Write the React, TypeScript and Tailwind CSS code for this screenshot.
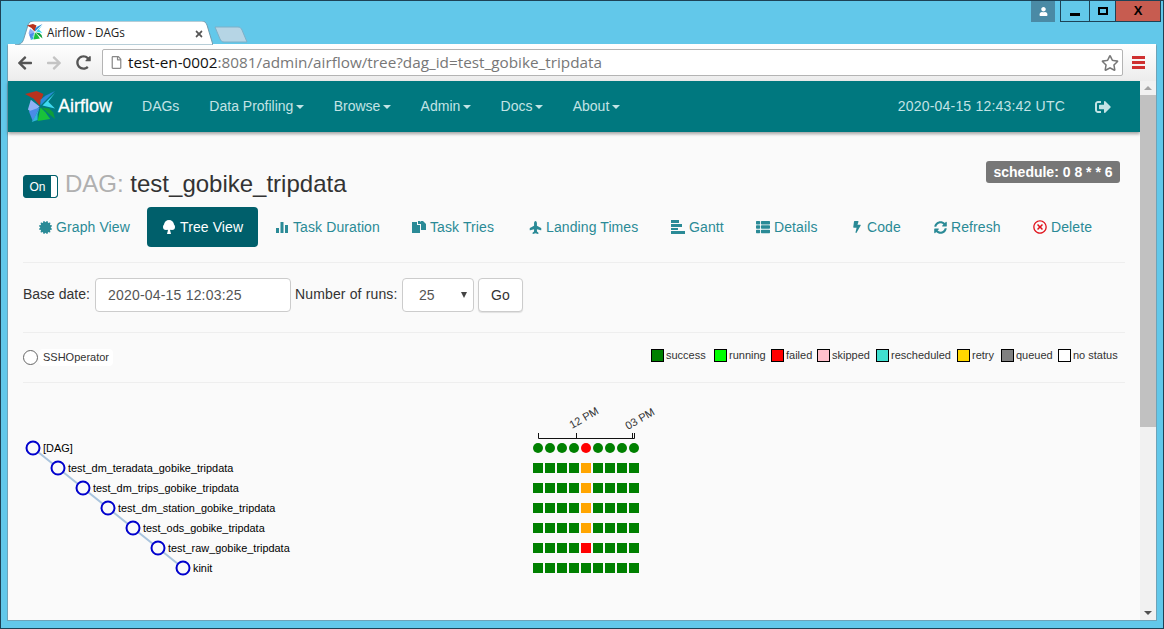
import { FaCertificate, FaPlane, FaThList, FaBolt, FaSyncAlt, FaRegTimesCircle, FaRegStar, FaArrowLeft, FaArrowRight, FaRedoAlt, FaUser, FaSignOutAlt, FaRegFile, FaTimes } from 'react-icons/fa';
import type { ReactNode } from 'react';

const FONT = 'font-["Liberation_Sans",Arial,sans-serif]';

function Pinwheel({ size }: { size: number }) {
  return (
    <svg width={size} height={size} viewBox="0 0 32 32">
      <polygon points="0,3 12,0 19,3 15,15 9,8" fill="#b8321e" />
      <polygon points="31,0 16,15 16,9 21,5" fill="#2a8bd8" />
      <polygon points="31,2 18,15 31,18 24,11" fill="#3fd8f0" />
      <polygon points="31,29 17,17 25,18 29,22" fill="#0e9e3a" />
      <polygon points="13,31 16,17 21,22 26,29" fill="#19c23a" />
      <polygon points="7,32 15,17 13,24 13,30" fill="#2fb5d8" />
      <polygon points="6,9 15,16 8,23 3,19" fill="#8fb0f5" />
      <polygon points="8,31 15,17 4,21" fill="#4a8be8" />
    </svg>
  );
}

function TabLink({ icon, label, width, active, red, narrow }: { icon: ReactNode; label: string; width: string; active?: boolean; red?: boolean; narrow?: boolean }) {
  return (
    <a
      className={`flex h-[40px] shrink-0 items-center gap-[4px] rounded-[4px] pl-[15px] text-[14px] tracking-[0.1px] ${width} ${
        active ? 'bg-[#005f6b] text-white' : 'text-[#2a8a96]'
      }`}
    >
      <span className={`flex justify-center ${narrow ? 'w-[12px]' : 'w-[14px]'} ${red ? 'text-[#e0131c]' : ''}`}>{icon}</span>
      {label}
    </a>
  );
}

function NavItem({ label, caret }: { label: string; caret?: boolean }) {
  return (
    <a className="flex items-center px-[15px] text-[14px] text-[#c3e3e5]">
      {label}
      {caret && <span className="ml-[2.25px] mt-[1px] h-0 w-0 border-x-[4px] border-t-[4px] border-x-transparent border-t-[#c3e3e5]" />}
    </a>
  );
}

function TreeIcon() {
  return (
    <svg width="14" height="14" viewBox="0 0 14 14" fill="currentColor">
      <circle cx="7" cy="5" r="5" />
      <circle cx="4" cy="7" r="3" />
      <circle cx="10" cy="7" r="3" />
      <polygon points="5.5,8 8.5,8 8,10 9,14 5,14 6,10" />
    </svg>
  );
}

function StatsIcon() {
  return (
    <svg width="14" height="14" viewBox="0 0 14 14" fill="currentColor">
      <rect x="1" y="8" width="3" height="5" />
      <rect x="5.5" y="2" width="3" height="11" />
      <rect x="10" y="5" width="3" height="8" />
    </svg>
  );
}

function DuplicateIcon() {
  return (
    <svg width="14" height="14" viewBox="0 0 14 14" fill="currentColor">
      <path d="M0 2h5v3h3v8H0z" />
      <path d="M6 1h2l2 2v1H6z" />
      <path d="M9 1h2l3 3v6H9V5L9 4z" />
    </svg>
  );
}

function GanttIcon() {
  return (
    <svg width="14" height="14" viewBox="0 0 14 14" fill="currentColor">
      <rect x="0" y="0" width="8" height="3" />
      <rect x="0" y="4" width="11" height="3" />
      <rect x="0" y="8" width="7" height="2" />
      <rect x="0" y="11" width="14" height="3" />
    </svg>
  );
}

const legend = [
  { label: 'success', color: 'bg-[#008000]', width: 'w-[63px]' },
  { label: 'running', color: 'bg-[#00ff00]', width: 'w-[57px]' },
  { label: 'failed', color: 'bg-[#ff0000]', width: 'w-[46px]' },
  { label: 'skipped', color: 'bg-[#ffc0cb]', width: 'w-[59px]' },
  { label: 'rescheduled', color: 'bg-[#40e0d0]', width: 'w-[81px]' },
  { label: 'retry', color: 'bg-[#ffd700]', width: 'w-[44px]' },
  { label: 'queued', color: 'bg-[#808080]', width: 'w-[57px]' },
  { label: 'no status', color: 'bg-white', width: 'w-[60px]' },
];

const tasks = [
  { name: '[DAG]', hot: '#ff0000' },
  { name: 'test_dm_teradata_gobike_tripdata', hot: '#ffa500' },
  { name: 'test_dm_trips_gobike_tripdata', hot: '#ffa500' },
  { name: 'test_dm_station_gobike_tripdata', hot: '#ffa500' },
  { name: 'test_ods_gobike_tripdata', hot: '#ffa500' },
  { name: 'test_raw_gobike_tripdata', hot: '#ff0000' },
  { name: 'kinit', hot: '#008000' },
];

// d3 style tree, coordinates are relative to the svg's top left
function TreeChart() {
  const top = 65;
  return (
    <svg width="1132" height="238" className="block">
      <path d={`M25 ${top} L175 ${top + 120}`} stroke="#a9c4de" strokeWidth="2" fill="none" />
      {tasks.map((t, i) => (
        <g key={t.name}>
          <circle cx={25 + i * 25} cy={top + i * 20} r="6.5" fill="#fafafa" stroke="#0000cd" strokeWidth="2" />
          <text x={35 + i * 25} y={top + i * 20 + 4} fontSize="10.9" fill="#000">
            {t.name}
          </text>
          {Array.from({ length: 9 }).map((_, j) => {
            const color = j === 4 ? t.hot : '#008000';
            return i === 0 ? (
              <circle key={j} cx={530 + j * 12} cy={top} r="5" fill={color} />
            ) : (
              <rect key={j} x={525 + j * 12} y={top + i * 20 - 5} width="10" height="10" fill={color} />
            );
          })}
        </g>
      ))}
      <path d="M530.5 50V55.5H626.5V50M568.5 50V55.5M624.5 50V55.5" stroke="#111" fill="none" />
      <text x="0" y="0" fontSize="11" fill="#333" transform="translate(564 46) rotate(-30)">12 PM</text>
      <text x="0" y="0" fontSize="11" fill="#333" transform="translate(620 47) rotate(-30)">03 PM</text>
    </svg>
  );
}

export default function App() {
  return (
    <div className={`${FONT} flex h-[629px] w-[1164px] flex-col overflow-hidden border border-[#1d4256] bg-[#62c8ea]`}>
      {/* window title area */}
      <div className="flex h-[43px] shrink-0">
        <div className="relative mt-[20px] ml-[14px] flex h-[23px] w-[198px] items-center pl-[12px] pr-[12px]">
          <svg width="198" height="24" className="absolute top-0 left-0">
            <path d="M0 24C6 24 8 21 9 17L13 4C14 1 16 0 19 0H187C190 0 191 2 192 4L198 24Z" fill="#fff" stroke="#6f9cb0" />
          </svg>
          <span className="relative flex items-center gap-[4px] text-[11.7px] text-[#222]">
            <Pinwheel size={16} />
            <span className="font-['Open_Sans']">Airflow - DAGs</span>
          </span>
          <FaTimes size={10} className="absolute left-[179px] top-[8px] text-[#555]" />
        </div>
        <svg width="36" height="18" className="mt-[25px] ml-[1px]">
          <path d="M1 1H24C26 1 27 2 28 4L33 16H10C8 16 7 15 6 13Z" fill="#b6d5e5" stroke="#7db0c8" />
        </svg>
        <div className="ml-auto mr-[2px] flex h-[21px] items-start">
          <div className="mr-[5px] flex h-[21px] w-[24px] items-center justify-center bg-[#4a8aa5] text-white">
            <FaUser size={9} />
          </div>
          <div className="flex h-[21px] w-[101px] border border-t-0 border-[#1d4256]">
            <div className="flex w-[28px] items-end justify-center pb-[5px]">
              <div className="h-[3px] w-[10px] bg-black" />
            </div>
            <div className="flex w-[26px] items-center justify-center border-l border-[#1d4256]">
              <div className="h-[8px] w-[10px] border-2 border-black" />
            </div>
            <div className="flex flex-1 items-center justify-center border-l border-[#1d4256] bg-[#c75c50] text-[13px] font-bold text-black">
              X
            </div>
          </div>
        </div>
      </div>

      {/* browser */}
      <div className="ml-[6px] mr-[6px] flex min-h-0 flex-1 flex-col rounded-t-[2px] border border-t-0 border-[#6ea3b8] bg-white">
        <div className="flex h-[37px] shrink-0 items-center bg-gradient-to-b from-white to-[#ececec]">
          <div className="flex w-[94px] items-center pl-[9px] text-[#555]">
            <FaArrowLeft size={16} />
            <FaArrowRight size={16} className="ml-[13px] text-[#c4c4c4]" />
            <FaRedoAlt size={15} className="ml-[14px]" />
          </div>
          <div className="flex h-[27px] w-[1021px] items-center rounded-[2px] border border-[#b4b4b4] bg-white pl-[7px] pr-[3px] font-['Open_Sans'] text-[15.3px] text-[#777]">
            <FaRegFile size={13} className="mr-[5px] text-[#888]" />
            <span className="text-[#111]">test-en-0002</span>:8081/admin/airflow/tree?dag_id=test_gobike_tripdata
            <FaRegStar size={18} className="ml-auto text-[#777]" />
          </div>
          <div className="ml-[9px] flex w-[13px] flex-col gap-[2px]">
            <div className="h-[3px] bg-[#cf3030]" />
            <div className="h-[3px] bg-[#cf3030]" />
            <div className="h-[3px] bg-[#cf3030]" />
          </div>
        </div>

        <div className="flex min-h-0 flex-1">
          <div className="flex min-w-0 flex-1 flex-col bg-[#fafafa]">
            {/* airflow navbar */}
            <div className="flex h-[51px] shrink-0 items-center bg-[#00787f] shadow-[0_2px_3px_rgba(0,0,0,0.35)]">
              <div className="ml-[17px] mr-[15px] flex items-center gap-[2px]">
                <Pinwheel size={31} />
                <span className="text-[18px] text-white [-webkit-text-stroke:0.3px_white]">Airflow</span>
              </div>
              <NavItem label="DAGs" />
              <NavItem label="Data Profiling" caret />
              <NavItem label="Browse" caret />
              <NavItem label="Admin" caret />
              <NavItem label="Docs" caret />
              <NavItem label="About" caret />
              <span className="ml-auto text-[14px] tracking-[0.2px] text-[#c3e3e5]">2020-04-15 12:43:42 UTC</span>
              <FaSignOutAlt size={16} className="ml-[30px] mr-[29px] text-[#c3e3e5]" />
            </div>

            <div className="flex shrink-0 flex-col px-[15px] pt-[29px]">
              <div className="flex h-[46px] items-start">
                <div className="mt-[14px] flex h-[23px] w-[35px] overflow-hidden rounded-[3px] border border-[#005f6b] bg-[#005f6b]">
                  <span className="flex w-[27px] items-center justify-center text-[12px] text-white">On</span>
                  <span className="flex-1 rounded-r-[2px] bg-white" />
                </div>
                <h4 className="ml-[7px] mt-[9px] text-[24px] leading-[28px] text-[#333]">
                  <span className="text-[#b0b0b0]">DAG: </span>test_gobike_tripdata
                </h4>
                <span className="ml-auto mr-[5px] flex h-[22px] w-[134px] items-center justify-center rounded-[3px] bg-[#777] text-[14px] font-bold text-white">
                  schedule: 0 8 * * 6
                </span>
              </div>

              <div className="flex gap-[2px]">
                <TabLink width="w-[122px]" icon={<FaCertificate size={13} />} label="Graph View" />
                <TabLink width="w-[111px]" icon={<TreeIcon />} label="Tree View" active />
                <TabLink width="w-[135px]" icon={<StatsIcon />} label="Task Duration" />
                <TabLink width="w-[114px]" icon={<DuplicateIcon />} label="Task Tries" />
                <TabLink width="w-[141px]" icon={<FaPlane size={13} className="-rotate-90" />} label="Landing Times" />
                <TabLink width="w-[83px]" icon={<GanttIcon />} label="Gantt" />
                <TabLink width="w-[93px]" icon={<FaThList size={14} />} label="Details" />
                <TabLink width="w-[80px]" icon={<FaBolt size={12} />} label="Code" narrow />
                <TabLink width="w-[98px]" icon={<FaSyncAlt size={13} />} label="Refresh" />
                <TabLink width="w-[89px]" icon={<FaRegTimesCircle size={14} />} label="Delete" red />
              </div>

              <div className="mt-[15px] border-t border-[#eeeeee]" />

              <div className="flex h-[70px] items-start border-b border-[#eeeeee] pt-[15px] text-[14px] text-[#333]">
                <span className="mt-[6px]">Base date:</span>
                <div className="ml-[5px] flex h-[34px] w-[196px] items-center rounded-[4px] border border-[#cccccc] bg-white pl-[12px] tracking-[0.2px] text-[#555]">
                  2020-04-15 12:03:25
                </div>
                <span className="ml-[4px] mt-[6px] w-[103px] tracking-[0.15px]">Number of runs:</span>
                <div className="relative ml-[4px] flex h-[34px] w-[72px] items-center rounded-[4px] border border-[#cccccc] bg-white pl-[16px] text-[#555]">
                  25
                  <span className="absolute right-[6px] top-[13px] h-0 w-0 border-x-[3px] border-t-[6px] border-x-transparent border-t-[#444]" />
                </div>
                <button className="ml-[4px] h-[34px] w-[45px] rounded-[4px] border border-[#cccccc] bg-white text-[#333] shadow-[0_1px_1px_rgba(0,0,0,0.1)]">
                  Go
                </button>
              </div>

              <div className="flex h-[50px] items-center border-b border-[#eeeeee] text-[11px] text-[#333]">
                <span className="h-[15px] w-[15px] rounded-full border border-[#666] bg-white" />
                <span className="ml-[1px] rounded-[4px] bg-white px-[4px]">SSHOperator</span>
                <div className="mb-[5px] ml-auto mr-[7px] flex">
                  {legend.map((l) => (
                    <span key={l.label} className={`flex shrink-0 items-center gap-[2px] whitespace-nowrap ${l.width}`}>
                      <span className={`h-[13px] w-[13px] shrink-0 border border-black ${l.color}`} />
                      {l.label}
                    </span>
                  ))}
                </div>
              </div>
            </div>
            <div className="min-h-0">
              <TreeChart />
            </div>
          </div>

          {/* scrollbar */}
          <div className="flex w-[16px] shrink-0 flex-col items-center bg-[#f1f1f1]">
            <div className="mt-[5px] h-0 w-0 border-x-[4px] border-b-[4px] border-x-transparent border-b-[#a3a3a3]" />
            <div className="mt-[5px] h-[332px] w-full bg-[#c1c1c1]" />
            <div className="mt-auto mb-[5px] h-0 w-0 border-x-[4px] border-t-[4px] border-x-transparent border-t-[#505050]" />
          </div>
        </div>
      </div>
      <div className="h-[7px] shrink-0" />
    </div>
  );
}
